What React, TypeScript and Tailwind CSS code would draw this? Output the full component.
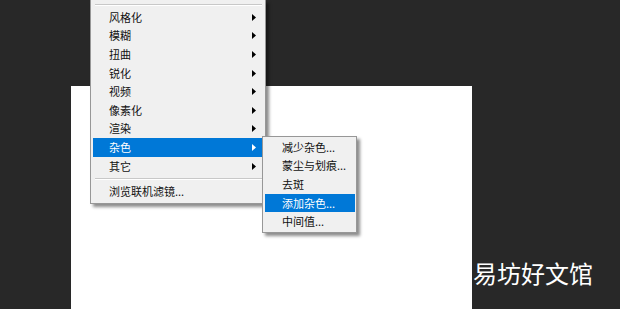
const mainItems = [
  { label: '风格化', sub: true },
  { label: '模糊', sub: true },
  { label: '扭曲', sub: true },
  { label: '锐化', sub: true },
  { label: '视频', sub: true },
  { label: '像素化', sub: true },
  { label: '渲染', sub: true },
  { label: '杂色', sub: true, active: true },
  { label: '其它', sub: true },
];

const noiseItems = [
  { label: '减少杂色...' },
  { label: '蒙尘与划痕...' },
  { label: '去斑' },
  { label: '添加杂色...', active: true },
  { label: '中间值...' },
];

const Arrow = ({ light }: { light?: boolean }) => (
  <svg width="4" height="7" viewBox="0 0 4 7" className="shrink-0">
    <path d="M0 0 L4 3.5 L0 7 Z" fill={light ? '#ffffff' : '#000000'} />
  </svg>
);

const Separator = () => (
  <div className="h-[7px] flex flex-col justify-center pl-[2px] pr-[1px]">
    <div className="h-px bg-[#c8c8c8]" />
    <div className="h-px bg-white" />
  </div>
);

const MenuRow = ({ label, sub, active, indent }: { label: string; sub?: boolean; active?: boolean; indent: string }) => (
  <div
    className={`h-[18.6px] flex items-center justify-between pr-[7px] ${indent} ${
      active ? 'bg-[#0078d7] text-white' : 'text-[#111111]'
    }`}
  >
    <span className="leading-none">{label}</span>
    {sub && <Arrow light={active} />}
  </div>
);

export default function App() {
  return (
    <div
      className="relative w-[620px] h-[309px] overflow-hidden bg-[#282828]"
      style={{ fontFamily: '"Noto Sans CJK SC", "Noto Sans", sans-serif' }}
    >
      {/* document canvas */}
      <div className="pt-[86px] pl-[71px]">
        <div className="w-[401px] h-[223px] bg-white" />
      </div>

      {/* filter menu */}
      <div className="absolute left-[90px] top-0 w-[176px] bg-[#f0f0f0] border-x border-b border-[#979797] shadow-[3px_3px_3px_rgba(0,0,0,0.45)] pt-[1px] pb-[2px] pl-[2px] pr-[2px] text-[11px]">
        <Separator />
        {mainItems.map((item) => (
          <MenuRow key={item.label} {...item} indent="pl-[16px]" />
        ))}
        <Separator />
        <MenuRow label="浏览联机滤镜..." indent="pl-[16px]" />
      </div>

      {/* noise submenu */}
      <div className="absolute left-[262px] top-[136px] w-[95px] bg-[#f0f0f0] border border-[#979797] shadow-[3px_3px_3px_rgba(0,0,0,0.45)] pt-[1px] pb-[1px] pl-[2px] pr-[1px] text-[11px]">
        {noiseItems.map((item) => (
          <MenuRow key={item.label} {...item} indent="pl-[17px]" />
        ))}
      </div>

      {/* watermark */}
      <div className="absolute left-[473px] top-[261px] text-[24px] leading-none text-white">易坊好文馆</div>
    </div>
  );
}
